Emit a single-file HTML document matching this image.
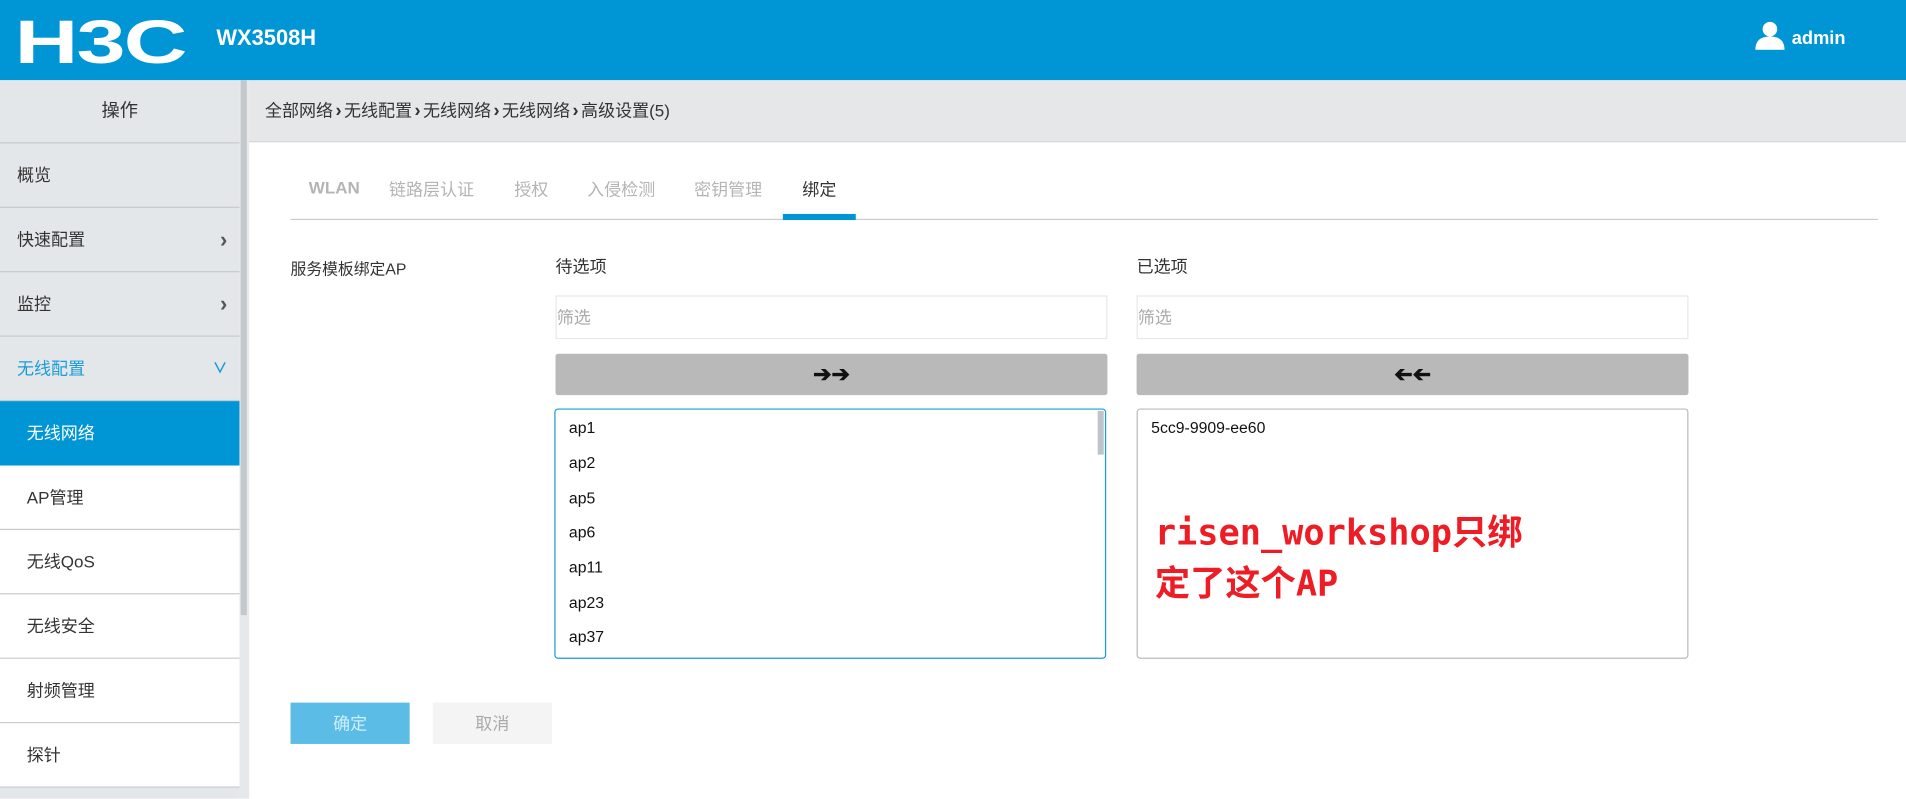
<!DOCTYPE html>
<html><head><meta charset="utf-8"><style>
*{margin:0;padding:0;box-sizing:border-box}
html,body{width:1906px;height:799px;overflow:hidden;background:#fff}
#w{width:1568px;height:657px;transform:scale(1.2156);transform-origin:0 0;position:relative;font-family:"Liberation Sans","Noto Sans CJK SC",sans-serif;color:#333;font-size:14px}
.a{position:absolute}
.hd{left:0;top:0;width:1568px;height:66px;background:#0096d6}
.sb{left:0;top:66px;width:197px;height:591px;background:#e4e7ea}
.sc{left:197px;top:66px;width:8px;height:591px;background:#e6e8ea}
.sct{left:198px;top:66px;width:5px;height:440px;background:#c3c8cd}
.it{position:absolute;left:0;width:197px;height:53px;line-height:52px;padding-left:14px;border-bottom:1px solid #c7c9cc;font-size:14px;color:#333}
.chev{position:absolute;right:10px;top:0;color:#555;font-weight:bold;font-size:18px}
.bc{left:205px;top:66px;width:1363px;height:51px;background:#e6e7e8;border-bottom:1px solid #d8d8d8;line-height:51px;padding-left:13px;font-size:14px;color:#333}
.bc b{font-size:15px;margin:0 2px}
.tab{position:absolute;top:146px;font-size:14px;color:#b4b4b4}
.inp{position:absolute;height:36px;border:1px solid #e8e8e8;line-height:34px;font-size:14px;color:#aaa;width:454px}
.btn{position:absolute;top:291px;width:454px;height:34px;background:#b9b9ba;border-radius:2px;text-align:center;line-height:34px;font-size:18px;font-weight:bold;color:#111}
.lst{position:absolute;top:336px;width:454px;height:206px;border-radius:3px;background:#fff}
.li{position:absolute;left:11px;font-size:13px;color:#111}
</style></head><body><div id="w">
<div class="a hd"></div>
<div class="a" style="left:12px;top:10px;color:#fff;font:bold 50px/50px 'Liberation Sans',sans-serif;letter-spacing:-1px;transform:scaleX(1.45);transform-origin:0 0">H3C</div>
<div class="a" style="left:178px;top:21px;color:#fff;font-weight:bold;font-size:18px">WX3508H</div>
<svg class="a" style="left:1443px;top:17px" width="26" height="24" viewBox="0 0 26 24"><circle cx="13" cy="7" r="6" fill="#fff"/><path d="M1 24 Q1 13 13 13 Q25 13 25 24Z" fill="#fff"/></svg>
<div class="a" style="left:1474px;top:23px;color:#fff;font-weight:bold;font-size:15px">admin</div>
<div class="a sb"></div>
<div class="a sc"></div><div class="a sct"></div>
<div class="it" style="top:66px;height:52px;line-height:52px;text-align:center;padding:0;font-size:15px">操作</div>
<div class="it" style="top:118px">概览</div>
<div class="it" style="top:171px">快速配置<span class="chev">›</span></div>
<div class="it" style="top:224px">监控<span class="chev">›</span></div>
<div class="it" style="top:277px;color:#1a9bd7">无线配置<span class="chev" style="color:#1a9bd7;font-size:12px">∨</span></div>
<div class="it" style="top:330px;background:#0096d6;color:#fff;padding-left:22px;border:0">无线网络</div>
<div class="it" style="top:383px;background:#fff;padding-left:22px">AP管理</div>
<div class="it" style="top:436px;background:#fff;padding-left:22px">无线QoS</div>
<div class="it" style="top:489px;background:#fff;padding-left:22px">无线安全</div>
<div class="it" style="top:542px;background:#fff;padding-left:22px">射频管理</div>
<div class="it" style="top:595px;background:#fff;padding-left:22px">探针</div>
<div class="a bc">全部网络<b>›</b>无线配置<b>›</b>无线网络<b>›</b>无线网络<b>›</b>高级设置(5)</div>
<div class="tab" style="left:254px;font-weight:bold">WLAN</div>
<div class="tab" style="left:320px">链路层认证</div>
<div class="tab" style="left:423px">授权</div>
<div class="tab" style="left:483px">入侵检测</div>
<div class="tab" style="left:571px">密钥管理</div>
<div class="tab" style="left:660px;color:#333">绑定</div>
<div class="a" style="left:239px;top:180px;width:1306px;height:1px;background:#ccc"></div>
<div class="a" style="left:644px;top:176px;width:60px;height:5px;background:#0096d6"></div>
<div class="a" style="left:239px;top:211px;font-size:13px">服务模板绑定AP</div>
<div class="a" style="left:457px;top:209px">待选项</div>
<div class="a" style="left:935px;top:209px">已选项</div>
<div class="inp" style="left:457px;top:243px">筛选</div>
<div class="inp" style="left:935px;top:243px">筛选</div>
<div class="btn" style="left:457px">➔➔</div>
<div class="btn" style="left:935px"><span style="display:inline-block;transform:scaleX(-1)">➔➔</span></div>
<div class="lst" style="left:456px;border:1px solid #1a9bd7">
<div class="li" style="top:7px">ap1</div><div class="li" style="top:36px">ap2</div><div class="li" style="top:65px">ap5</div><div class="li" style="top:93px">ap6</div><div class="li" style="top:122px">ap11</div><div class="li" style="top:151px">ap23</div><div class="li" style="top:179px">ap37</div>
<div style="position:absolute;left:446px;top:1px;width:5px;height:36px;background:#c0c4c8"></div>
</div>
<div class="lst" style="left:935px;border:1px solid #bbb">
<div class="li" style="top:7px">5cc9-9909-ee60</div>
<div style="position:absolute;left:14px;top:80px;color:#ee1c24;font:bold 29px/42px 'DejaVu Sans Mono','Noto Sans CJK SC',monospace;white-space:nowrap">risen_workshop只绑<br>定了这个AP</div>
</div>
<div class="a" style="left:239px;top:578px;width:98px;height:34px;background:#5bbde6;color:#cfeefb;text-align:center;line-height:34px">确定</div>
<div class="a" style="left:356px;top:578px;width:98px;height:34px;background:#f4f4f4;color:#aaa;text-align:center;line-height:34px">取消</div>
</div></body></html>
